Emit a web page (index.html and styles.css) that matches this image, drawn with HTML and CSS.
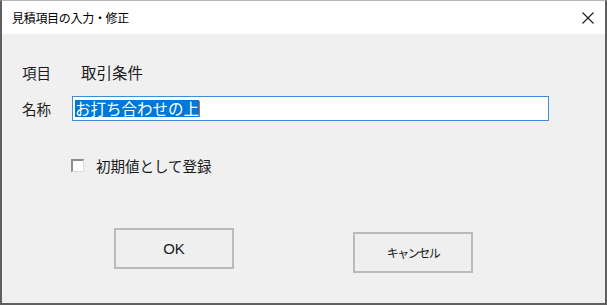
FILE: index.html
```html
<!DOCTYPE html>
<html lang="ja">
<head>
    <meta charset="UTF-8">
    <title>見積項目の入力・修正</title>
    <link rel="stylesheet" href="styles.css">
</head>
<body>
    <div class="window">
        <div class="title-bar">
            <span class="title">見積項目の入力・修正</span>
            <svg class="close" width="12" height="12" viewBox="0 0 12 12">
                <path d="M0.5 0.5 L11.5 11.5 M11.5 0.5 L0.5 11.5" stroke="#1a1a1a" stroke-width="1.1" fill="none"/>
            </svg>
        </div>
        <div class="content">
            <div class="row row-item">
                <span class="label label-item">項目</span>
                <span class="value">取引条件</span>
            </div>
            <div class="row row-name">
                <span class="label label-name">名称</span>
                <div class="text-box">
                    <span class="selected">お打ち合わせの上</span><span class="caret"></span>
                </div>
            </div>
            <div class="row row-check">
                <span class="check-box"></span>
                <span class="check-label">初期値として登録</span>
            </div>
            <div class="buttons">
                <div class="btn btn-ok">OK</div>
                <div class="btn btn-cancel">キャンセル</div>
            </div>
        </div>
    </div>
</body>
</html>
```

FILE: styles.css
```css
/* dialog window */
body {
    margin: 0;
    font-family: "Noto Sans CJK JP", "Liberation Sans", sans-serif;
    background-color: #ffffff;
}

.window {
    width: 607px;
    height: 305px;
    box-sizing: border-box;
    border-top: 1px solid #b5b5b5;
    border-left: 2px solid #5f5f5f;
    border-right: 2px solid #5f5f5f;
    border-bottom: 2px solid #5f5f5f;
    background-color: #f0f0f0;
    display: flex;
    flex-direction: column;
}

.title-bar {
    height: 33px;
    background-color: #ffffff;
    display: flex;
    align-items: center;
    justify-content: space-between;
    padding: 0 10px 0 10px;
    flex-shrink: 0;
}

.title {
    font-size: 12px;
    color: #000000;
    letter-spacing: -0.3px;
}

.close {
    margin-right: 1px;
    margin-top: 1px;
}

.content {
    display: flex;
    flex-direction: column;
    padding-left: 20px;
}

.row {
    display: flex;
    align-items: center;
    font-size: 15px;
    color: #1a1a1a;
}

.row-item {
    margin-top: 28px;
    height: 20px;
}

.label-item {
    width: 59px;
    font-size: 14.5px;
}

.value {
    font-size: 15.5px;
}

.row-name {
    margin-top: 14px;
    height: 25px;
}

.label-name {
    width: 50px;
    font-size: 14.5px;
}

.text-box {
    width: 477px;
    height: 25px;
    box-sizing: border-box;
    border: 1px solid #3b8fd9;
    background-color: #ffffff;
    display: flex;
    align-items: center;
    padding-left: 2px;
}

.selected {
    background-color: #0078d7;
    color: #ffffff;
    font-size: 15.5px;
    line-height: 17px;
}

.caret {
    width: 1px;
    height: 16px;
    background-color: #e0632a;
}

.row-check {
    margin-top: 38px;
    height: 13px;
    padding-left: 49px;
}

.check-box {
    width: 13px;
    height: 13px;
    box-sizing: border-box;
    border-top: 2px solid #8c8c8c;
    border-left: 2px solid #8c8c8c;
    border-right: 1px solid #dcdcdc;
    border-bottom: 1px solid #dcdcdc;
    background-color: #ffffff;
}

.check-label {
    margin-left: 12px;
    font-size: 14.5px;
}

.buttons {
    display: flex;
    align-items: flex-start;
    margin-top: 56px;
    padding-left: 92px;
}

.btn {
    width: 120px;
    height: 41px;
    box-sizing: border-box;
    border: 2px solid #bababa;
    background-color: #efefef;
    display: flex;
    align-items: center;
    justify-content: center;
    color: #1a1a1a;
}

.btn-ok {
    font-family: "Liberation Sans", sans-serif;
    font-size: 15px;
}

.btn-cancel {
    margin-left: 119px;
    margin-top: 4px;
    font-size: 12px;
    letter-spacing: -1.5px;
}
```
